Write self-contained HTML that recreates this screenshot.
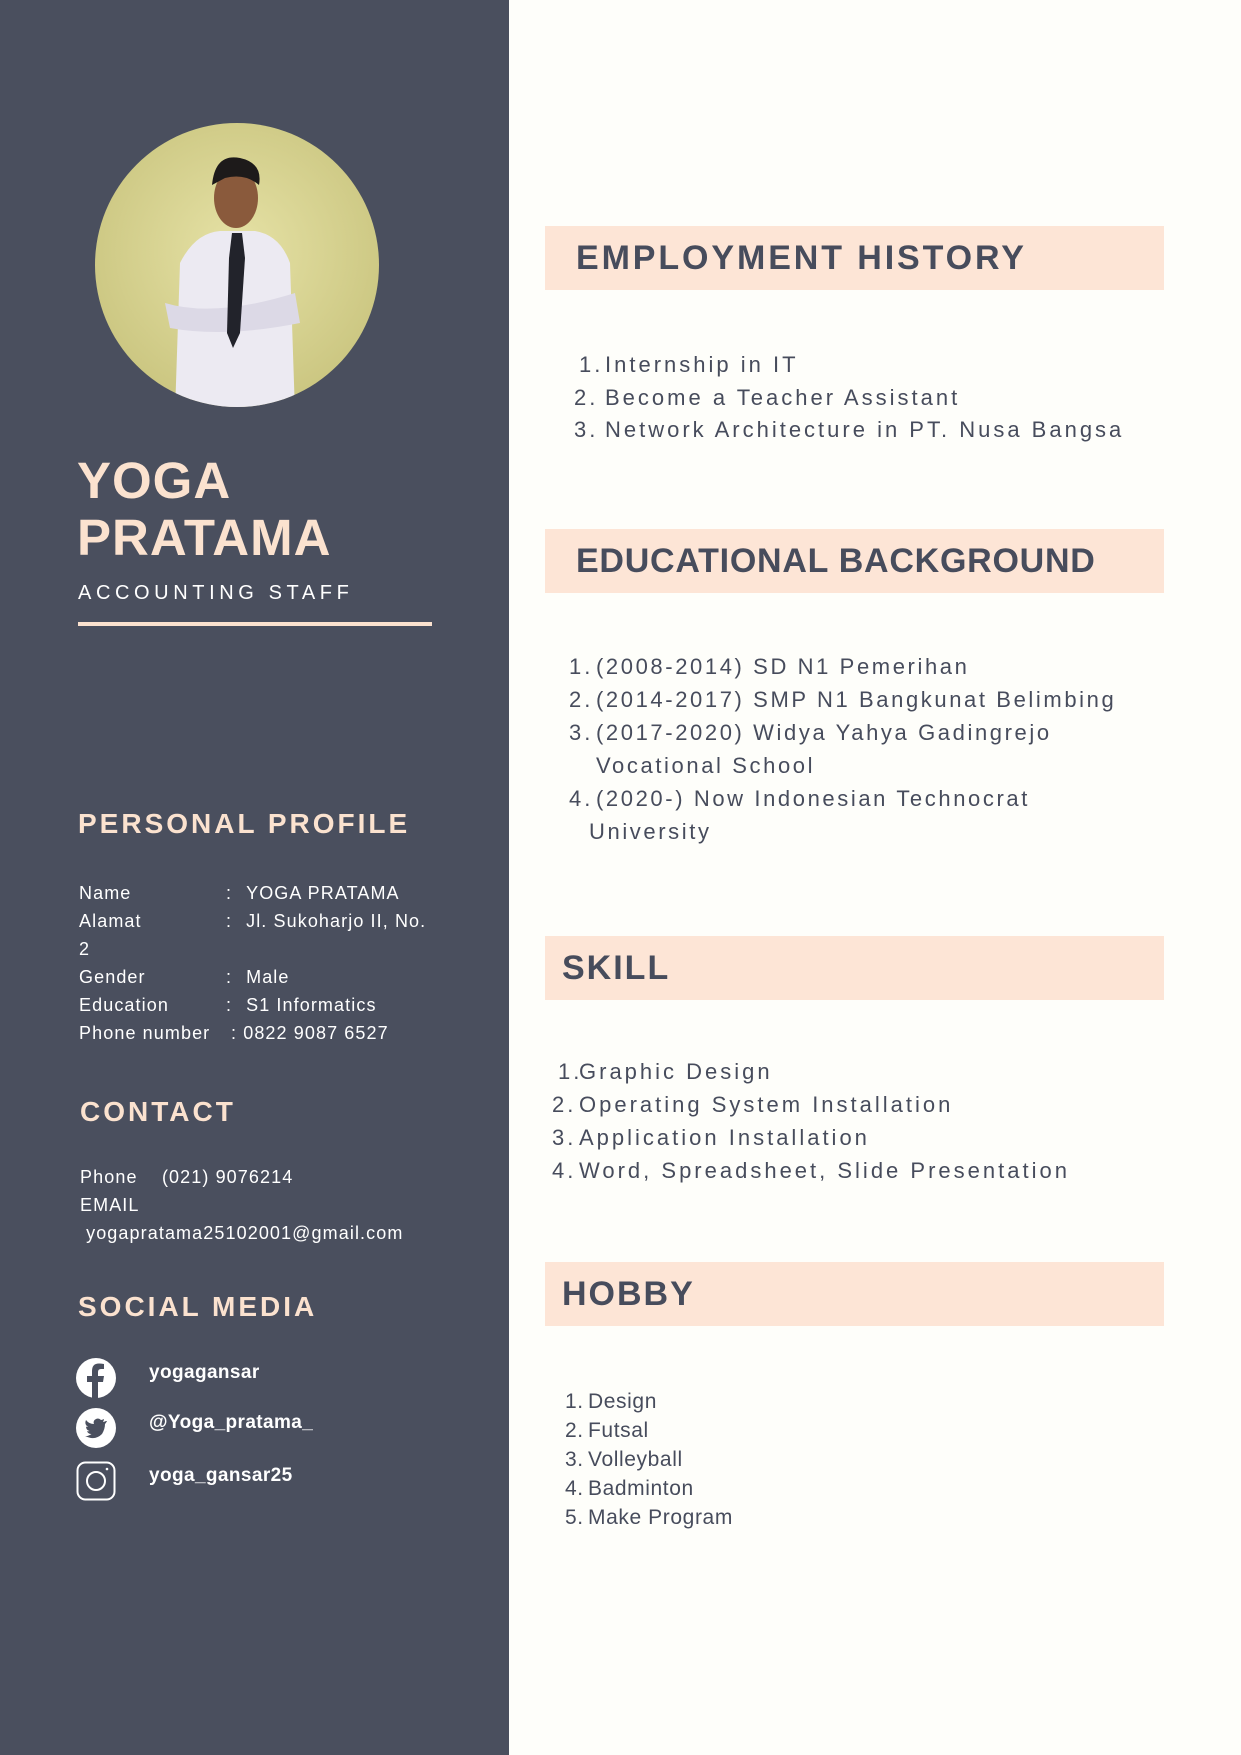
<!DOCTYPE html>
<html><head><meta charset="utf-8">
<style>
*{margin:0;padding:0;box-sizing:border-box}
body{width:1241px;height:1755px;position:relative;background:#fefefa;font-family:"Liberation Sans",sans-serif;overflow:hidden}
.side{position:absolute;left:0;top:0;width:509px;height:1755px;background:#4a4f5e}
.a{position:absolute;white-space:nowrap}
.pe{color:#fbe2cf}
.w{color:#fff}
.h{font-weight:bold;letter-spacing:3px;font-size:28px;color:#fbe2cf}
.pl{font-size:18px;color:#fff;line-height:28px;letter-spacing:1.1px}
.box{position:absolute;left:545px;width:619px;height:64px;background:#fde5d6}
.bt{position:absolute;font-weight:bold;font-size:34px;color:#474c5c;letter-spacing:1.5px;line-height:64px;top:0}
.li{font-size:22px;color:#474c5c;letter-spacing:3px;line-height:33px}
.hb{font-size:21px;color:#474c5c;line-height:29px;letter-spacing:.6px}
</style></head><body>
<div class="side"></div>
<svg class="a" style="left:95px;top:123px" width="284" height="284" viewBox="0 0 284 284">
<defs><radialGradient id="g" cx="50%" cy="45%" r="60%"><stop offset="0" stop-color="#e6e2a6"/><stop offset="1" stop-color="#c9c47e"/></radialGradient>
<clipPath id="c"><circle cx="142" cy="142" r="142"/></clipPath></defs>
<circle cx="142" cy="142" r="142" fill="url(#g)"/>
<g clip-path="url(#c)">
<path d="M85 140 Q100 110 125 108 L160 108 Q185 112 195 140 L200 290 L80 290 Z" fill="#eceaf2"/>
<path d="M70 180 Q120 195 200 170 L205 200 Q130 215 75 205 Z" fill="#dcd9e6"/>
<path d="M137 110 L147 110 L150 135 L145 210 L138 225 L132 210 L134 135 Z" fill="#22232b"/>
<ellipse cx="141" cy="75" rx="22" ry="30" fill="#8a5a3c"/>
<path d="M117 62 Q120 30 145 35 Q168 40 164 62 Q150 50 130 55 Z" fill="#1d1a1a"/>
</g></svg>
<div class="a pe" style="left:77px;top:452px;font-size:51px;font-weight:bold;line-height:57px;letter-spacing:1px">YOGA<br>PRATAMA</div>
<div class="a w" style="left:78px;top:582px;font-size:20px;letter-spacing:4.6px">ACCOUNTING STAFF</div>
<div class="a" style="left:78px;top:622px;width:354px;height:4px;background:#fbe2cf"></div>
<div class="a h" style="left:78px;top:808px">PERSONAL PROFILE</div>
<div class="a pl" style="left:79px;top:879px">Name<br>Alamat<br>2<br>Gender<br>Education<br>Phone number</div>
<div class="a pl" style="left:226px;top:879px">:<br>:<br><br>:<br>:<br></div>
<div class="a pl" style="left:240px;top:879px">&nbsp;YOGA PRATAMA<br>&nbsp;Jl. Sukoharjo II, No.<br><br>&nbsp;Male<br>&nbsp;S1 Informatics<br></div>
<div class="a pl" style="left:231px;top:1019px">: 0822 9087 6527</div>
<div class="a h" style="left:80px;top:1096px">CONTACT</div>
<div class="a pl" style="left:80px;top:1163px">Phone&nbsp;&nbsp;&nbsp;&nbsp;(021) 9076214<br>EMAIL<br>&nbsp;yogapratama25102001@gmail.com</div>
<div class="a h" style="left:78px;top:1291px">SOCIAL MEDIA</div>
<svg class="a" style="left:76px;top:1358px" width="40" height="40" viewBox="0 0 40 40"><circle cx="20" cy="20" r="20" fill="#fff"/><path d="M22 40 V24 H27 L28 18 H22 V14 Q22 11 25 11 H28 V6 Q25 5.5 23 5.5 Q16 5.5 16 13 V18 H11 V24 H16 V40 Z" fill="#4a4f5e"/></svg>
<svg class="a" style="left:76px;top:1408px" width="40" height="40" viewBox="0 0 40 40"><circle cx="20" cy="20" r="20" fill="#fff"/><path d="M30 13 Q28 14 27 14 Q28 12 28 11 Q26 12 25 12 Q22 9 18.5 12 Q17 14 18 16 Q13 16 10 12 Q8 16 12 19 Q11 19 10 18.5 Q10 22 13.5 23 Q12.5 23.5 11 23 Q12 26 15.5 26 Q12 28.5 9 28 Q19 33 26 26 Q29 21 29 16 Q30 15 31 13 Z" fill="#4a4f5e"/></svg>
<svg class="a" style="left:76px;top:1461px" width="40" height="40" viewBox="0 0 40 40"><rect x="1.5" y="1.5" width="37" height="37" rx="8" fill="none" stroke="#fff" stroke-width="2"/><circle cx="20" cy="20" r="9" fill="none" stroke="#fff" stroke-width="2"/><circle cx="31" cy="8" r="1.3" fill="#fff"/></svg>
<div class="a w" style="left:149px;top:1362px;font-size:19px;font-weight:bold;letter-spacing:.4px">yogagansar</div>
<div class="a w" style="left:149px;top:1412px;font-size:19px;font-weight:bold;letter-spacing:.4px">@Yoga_pratama_</div>
<div class="a w" style="left:149px;top:1465px;font-size:19px;font-weight:bold;letter-spacing:.4px">yoga_gansar25</div>

<div class="box" style="top:226px"><div class="bt" style="left:31px;letter-spacing:2.9px">EMPLOYMENT HISTORY</div></div>
<div class="a li" style="left:579px;top:348px">1.</div><div class="a li" style="left:605px;top:348px">Internship in IT</div>
<div class="a li" style="left:574px;top:381px">2.</div><div class="a li" style="left:605px;top:381px">Become a Teacher Assistant</div>
<div class="a li" style="left:574px;top:413px">3.</div><div class="a li" style="left:605px;top:413px">Network Architecture in PT. Nusa Bangsa</div>

<div class="box" style="top:529px"><div class="bt" style="left:31px;letter-spacing:.75px">EDUCATIONAL BACKGROUND</div></div>
<div class="a li" style="left:569px;top:650px">1.<br>2.<br>3.<br><br>4.</div>
<div class="a li" style="left:596px;top:650px;letter-spacing:2.6px">(2008-2014) SD N1 Pemerihan<br>(2014-2017) SMP N1 Bangkunat Belimbing<br>(2017-2020) Widya Yahya Gadingrejo<br>Vocational School<br>(2020-) Now Indonesian Technocrat</div>
<div class="a li" style="left:589px;top:815px;letter-spacing:2.6px">University</div>

<div class="box" style="top:936px"><div class="bt" style="left:17px;letter-spacing:2px">SKILL</div></div>
<div class="a li" style="left:558px;top:1055px">1.</div>
<div class="a li" style="left:552px;top:1088px">2.<br>3.<br>4.</div>
<div class="a li" style="left:579px;top:1055px">Graphic Design<br>Operating System Installation<br>Application Installation<br>Word, Spreadsheet, Slide Presentation</div>

<div class="box" style="top:1262px"><div class="bt" style="left:17px;letter-spacing:2px">HOBBY</div></div>
<div class="a hb" style="left:565px;top:1387px">1.<br>2.<br>3.<br>4.<br>5.</div>
<div class="a hb" style="left:588px;top:1387px">Design<br>Futsal<br>Volleyball<br>Badminton<br>Make Program</div>
</body></html>
